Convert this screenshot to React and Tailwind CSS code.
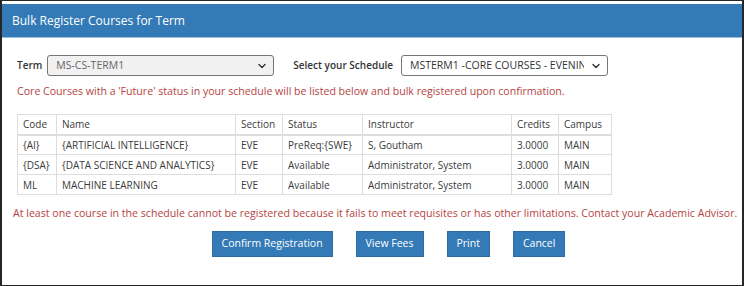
const courses = [
  { code: '{AI}', name: '{ARTIFICIAL INTELLIGENCE}', section: 'EVE', status: 'PreReq:{SWE}', instructor: 'S, Goutham', credits: '3.0000', campus: 'MAIN' },
  { code: '{DSA}', name: '{DATA SCIENCE AND ANALYTICS}', section: 'EVE', status: 'Available', instructor: 'Administrator, System', credits: '3.0000', campus: 'MAIN' },
  { code: 'ML', name: 'MACHINE LEARNING', section: 'EVE', status: 'Available', instructor: 'Administrator, System', credits: '3.0000', campus: 'MAIN' },
];

const columns = [
  { key: 'code', label: 'Code', width: 'w-[39px]' },
  { key: 'name', label: 'Name', width: 'w-[179px]' },
  { key: 'section', label: 'Section', width: 'w-[47px]' },
  { key: 'status', label: 'Status', width: 'w-[80px]' },
  { key: 'instructor', label: 'Instructor', width: 'w-[149px]' },
  { key: 'credits', label: 'Credits', width: 'w-[47px]' },
  { key: 'campus', label: 'Campus', width: 'w-[53px]' },
];

function Chevron() {
  return (
    <svg width="8" height="6" viewBox="0 0 8 6" className="shrink-0">
      <path d="M1 1.5 L4 4.5 L7 1.5" fill="none" stroke="#333" strokeWidth="1.4" strokeLinecap="round" strokeLinejoin="round" />
    </svg>
  );
}

function FakeSelect({ value, className, textClass }) {
  return (
    <div className={`h-[21px] flex items-center rounded-[3px] border border-[#767676] pl-[8px] pr-[7px] gap-2 text-[10.5px] ${className}`}>
      <span className={`flex-1 overflow-hidden whitespace-nowrap ${textClass}`}>{value}</span>
      <Chevron />
    </div>
  );
}

const buttons = ['Confirm Registration', 'View Fees', 'Print', 'Cancel'];

export default function App() {
  return (
    <div className="w-[744px] h-[286px] bg-[#262626] pt-px pl-[2px] pr-[2px] pb-px" style={{ fontFamily: '"Open Sans", sans-serif' }}>
      <div className="h-full bg-white pt-[3px]">
        {/* heading */}
        <div className="h-[34px] bg-[#337ab7] border-b border-[#9dbfdd] flex items-center px-[10px] text-white text-[12px]">
          Bulk Register Courses for Term
        </div>

        <div className="pl-[15px] pt-[17px] text-[10.5px] text-[#333]">
          <div className="flex items-center">
            <span className="font-semibold text-[10px] text-[#333]">Term</span>
            <FakeSelect value="MS-CS-TERM1" className="ml-[5px] w-[227px] bg-[#f1f1f1]" textClass="text-[#666]" />
            <span className="ml-[19px] font-semibold text-[10px] text-[#333]">Select your Schedule</span>
            <FakeSelect value="MSTERM1 -CORE COURSES - EVENING" className="ml-[8px] w-[207px] bg-white" textClass="text-[#333]" />
          </div>

          <p className="mt-[8px] leading-[15px] text-[10.6px] text-[#b5443f]">
            Core Courses with a 'Future' status in your schedule will be listed below and bulk registered upon confirmation.
          </p>

          <table className="mt-[15px] border-collapse text-[10px] text-[#3a3a3a] leading-[14px]">
            <thead>
              <tr className="h-[20px]">
                {columns.map((c) => (
                  <th key={c.key} className={`${c.width} border border-[#ddd] border-b-2 px-[5px] text-left font-normal`}>
                    {c.label}
                  </th>
                ))}
              </tr>
            </thead>
            <tbody>
              {courses.map((row) => (
                <tr key={row.code} className="h-[20px]">
                  {columns.map((c) => (
                    <td key={c.key} className="border border-[#ddd] px-[5px] whitespace-nowrap">
                      {row[c.key]}
                    </td>
                  ))}
                </tr>
              ))}
            </tbody>
          </table>
        </div>

        <p className="pl-[11px] mt-[11px] leading-[15px] text-[10.6px] text-[#b5443f] whitespace-nowrap">
          At least one course in the schedule cannot be registered because it fails to meet requisites or has other limitations. Contact your Academic Advisor.
        </p>

        <div className="mt-[10px] flex justify-center pl-[33px] gap-[23px]">
          {buttons.map((b) => (
            <button key={b} className="h-[26px] px-[9px] bg-[#337ab7] border border-[#2e6da4] text-white text-[10.5px]">
              {b}
            </button>
          ))}
        </div>
      </div>
    </div>
  );
}
